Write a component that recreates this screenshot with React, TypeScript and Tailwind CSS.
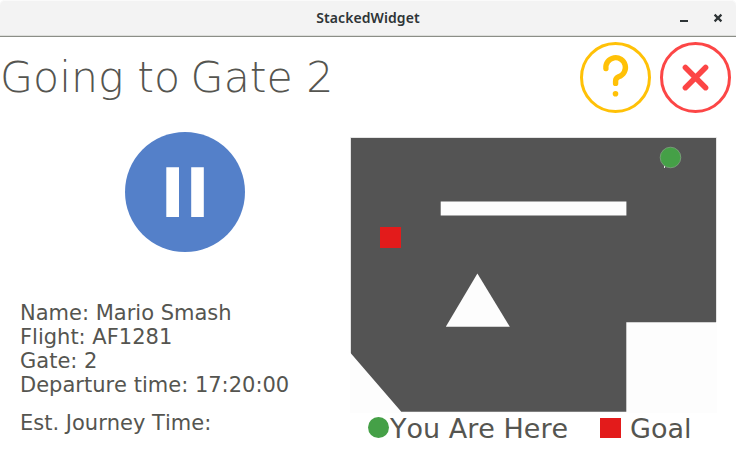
import React from 'react';

function TitleBar() {
  return (
    <header className="relative flex h-[37px] items-center justify-center rounded-t-[5px] border-b border-[#8b8e87] bg-[#f3f3f3] shadow-[inset_0_1px_0_#fafafa,inset_0_-1px_0_#dddedb]">
      <h1 className="font-['Noto_Sans',sans-serif] text-[14px] font-semibold leading-none tracking-[0.08px] text-[#2e3436]">StackedWidget</h1>
      <svg className="absolute right-0 top-0" width="66" height="36" viewBox="0 0 66 36" fill="none" stroke="#2e3436">
        <path d="M10 21H18" strokeWidth="2" />
        <path d="M44.6 14.6L51.4 21.4M51.4 14.6L44.6 21.4" strokeWidth="2.2" />
      </svg>
    </header>
  );
}

function HelpIcon() {
  return (
    <svg width="72" height="72" viewBox="0 0 72 72" fill="none" stroke="#ffc107">
      <circle cx="35.5" cy="36.5" r="34" strokeWidth="3" />
      <path d="M25.9 27.6A9.8 9.8 0 1 1 38.6 35.8Q35.6 37.2 35.6 39.9V42.4" strokeWidth="5.4" strokeLinecap="round" />
      <circle cx="35.5" cy="52.7" r="2.8" fill="#ffc107" stroke="none" />
    </svg>
  );
}

function CloseIcon() {
  return (
    <svg width="72" height="72" viewBox="0 0 72 72" fill="none" stroke="#fc4646">
      <circle cx="35.5" cy="36.5" r="34" strokeWidth="3" />
      <path d="M25.4 26.5L45.6 46.7M45.6 26.5L25.4 46.7" strokeWidth="5.5" strokeLinecap="round" />
    </svg>
  );
}

function PauseIcon() {
  return (
    <svg width="120" height="120" viewBox="0 0 120 120">
      <circle cx="60" cy="60" r="60" fill="#5480c9" />
      <path d="M41.3 35.2H54V85H41.3ZM66.2 35.2H78.8V85H66.2Z" fill="#fff" />
    </svg>
  );
}

function FloorMap() {
  return (
    <svg className="block" width="367" height="276" viewBox="350 137 367 276">
      <path d="M350 137H717V413H350Z" fill="#fdfdfd" />
      <path d="M350.5 353V137.5H716.5V322" fill="none" stroke="#e4e4e4" />
      <path d="M351 138H716V322.3H626.3V411.7H401.3L351 353.5Z" fill="#545454" />
      <path d="M440.7 201.6H626.4V215.4H440.7Z" fill="#fdfdfd" />
      <path d="M477.4 273.4L509.8 326.8H445.8Z" fill="#fdfdfd" />
      <path d="M380 227H401V248H380Z" fill="#e31b1b" />
      <path d="M664 166H665V168H664Z" fill="#e8e8e8" />
      <circle cx="670.5" cy="157.5" r="10.3" fill="#45a047" stroke="#91b491" strokeWidth=".6" />
    </svg>
  );
}

export default function App() {
  return (
    <div className="h-[453px] w-[736px] overflow-hidden bg-white font-['DejaVu_Sans',sans-serif] text-[#555550] [font-kerning:none]">
      <TitleBar />
      <div className="flex h-[95px] justify-between pr-1 pt-1">
        <h2 className="whitespace-nowrap font-['DejaVu_Sans_Light','DejaVu_Sans',sans-serif] text-[42.67px] font-extralight leading-[72px]">
          Going to<span className="[word-spacing:-3px]"> </span>Gate 2
        </h2>
        <div className="flex gap-2">
          <button className="h-[72px]"><HelpIcon /></button>
          <button className="h-[72px]"><CloseIcon /></button>
        </div>
      </div>
      <div className="flex">
        <section className="w-[350px]">
          <div className="flex justify-center pl-5">
            <PauseIcon />
          </div>
          <div className="pl-5 pt-[49px] text-[21px] leading-6">
            <p>Name: Mario Smash</p>
            <p>Flight: AF1281</p>
            <p>Gate: 2</p>
            <p>Departure time: 17:20:00</p>
            <p className="mt-[14px]">Est. Journey Time:</p>
          </div>
        </section>
        <section className="pt-[5px]">
          <FloorMap />
          <div className="flex h-8 items-center pl-[18px] text-[27px] leading-8">
            <span className="mb-[3px] size-[21px] rounded-full bg-[#45a047]" />
            <span className="w-[211px] pl-px">You Are Here</span>
            <span className="mb-[3px] mr-[9px] h-5 w-[21px] bg-[#e31b1b]" />
            <span>Goal</span>
          </div>
        </section>
      </div>
    </div>
  );
}
